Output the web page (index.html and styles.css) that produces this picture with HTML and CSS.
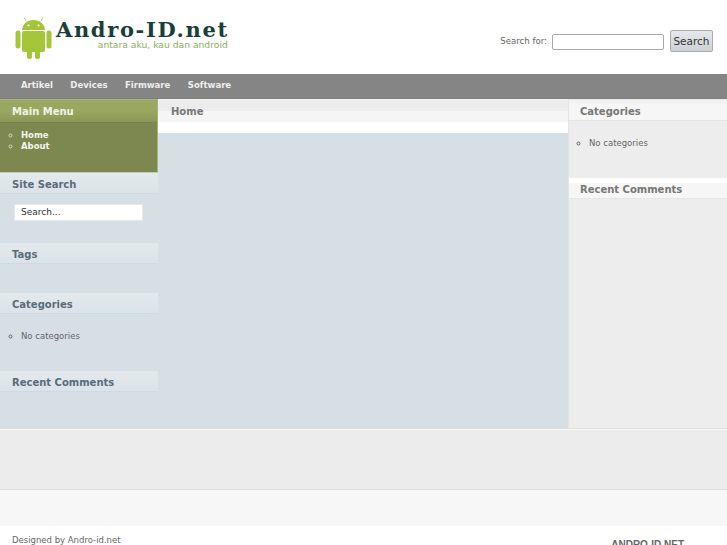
FILE: index.html
```html
<!DOCTYPE html>
<html lang="id">
<head>
<meta charset="utf-8">
<title>Andro-ID.net</title>
<link rel="stylesheet" href="styles.css">
</head>
<body>
<div class="page">
  <header class="header">
    <div class="logo">
      <svg class="logo-icon" width="37" height="42" viewBox="0 0 37 42" aria-hidden="true">
        <g fill="#a4c639">
          <path d="M7 13 C7.500 7 12 3 18.500 3 C25 3 29.500 7 30 13 Z"/>
          <rect x="7" y="14" width="23" height="21" rx="2"/>
          <rect x="0.500" y="13.500" width="5" height="18" rx="2.500"/>
          <rect x="31.500" y="13.500" width="5" height="18" rx="2.500"/>
          <rect x="12" y="30" width="5" height="12" rx="2.500"/>
          <rect x="20" y="30" width="5" height="12" rx="2.500"/>
        </g>
        <path d="M11 4 L9 0.500 M26 4 L28 0.500" stroke="#a4c639" stroke-width="0.800" fill="none"/>
        <circle cx="13.500" cy="8.500" r="1.100" fill="#fff"/>
        <circle cx="23.500" cy="8.500" r="1.100" fill="#fff"/>
      </svg>
      <div class="logo-text">
        <div class="logo-name">Andro-ID.net</div>
        <div class="logo-tag">antara aku, kau dan android</div>
      </div>
    </div>
    <form class="top-search">
      <label class="top-label" for="q">Search for:</label>
      <input class="top-input" id="q" type="text">
      <button class="top-button" type="button">Search</button>
    </form>
  </header>
  <nav class="nav">
    <a class="nav-link">Artikel</a>
    <a class="nav-link">Devices</a>
    <a class="nav-link">Firmware</a>
    <a class="nav-link">Software</a>
  </nav>
  <div class="columns">
    <aside class="left">
      <section class="menu-box">
        <h3 class="menu-title">Main Menu</h3>
        <ul class="list menu-list">
          <li>Home</li>
          <li>About</li>
        </ul>
      </section>
      <h3 class="side-title">Site Search</h3>
      <div class="side-search"><div class="side-input">Search...</div></div>
      <h3 class="side-title tags">Tags</h3>
      <h3 class="side-title cats">Categories</h3>
      <ul class="list plain"><li>No categories</li></ul>
      <h3 class="side-title recent">Recent Comments</h3>
    </aside>
    <main class="center">
      <h2 class="page-title">Home</h2>
    </main>
    <aside class="right">
      <h3 class="right-title">Categories</h3>
      <ul class="list plain right-list"><li>No categories</li></ul>
      <h3 class="right-title right-recent">Recent Comments</h3>
    </aside>
  </div>
  <div class="band"></div>
  <div class="band-light"></div>
  <footer class="footer">
    <span class="credit">Designed by Andro-id.net</span>
    <span class="brand">ANDRO-ID.NET</span>
  </footer>
</div>
</body>
</html>
```

FILE: styles.css
```css
html, body {
  margin: 0;
  padding: 0;
}
body {
  font-family: "DejaVu Sans", sans-serif;
  font-size: 8.500px;
  color: #555;
  background: #fff;
}
.page {
  height: 545px;
  overflow: hidden;
}
.header {
  height: 74px;
  display: flex;
  justify-content: space-between;
  align-items: flex-start;
  box-sizing: border-box;
  padding: 0 14px 0 15px;
}
.logo {
  display: flex;
  padding-top: 17px;
  gap: 4px;
}
.logo-icon {
  display: block;
}
.logo-text {
  display: flex;
  flex-direction: column;
  align-items: flex-end;
  padding-top: 5px;
}
.logo-name {
  font-family: "DejaVu Serif", serif;
  font-weight: bold;
  font-size: 21px;
  line-height: 16px;
  letter-spacing: 1.650px;
  color: #17403d;
  white-space: nowrap;
}
.logo-tag {
  font-size: 9.200px;
  line-height: 9px;
  margin: 2px 1px 0 0;
  color: #8cad5c;
  white-space: nowrap;
}
.top-search {
  display: flex;
  align-items: center;
  padding-top: 30px;
  margin: 0;
}
.top-label {
  font-size: 8.600px;
  color: #666;
  margin-right: 5px;
}
.top-input {
  width: 112px;
  height: 16px;
  box-sizing: border-box;
  border: 1px solid #a9a9a9;
  border-radius: 2px;
  background: #fff;
  margin: 1px 6px 0 0;
  padding: 0;
}
.top-button {
  width: 43px;
  height: 22px;
  box-sizing: border-box;
  border: 1px solid #aaa;
  border-radius: 2px;
  background: linear-gradient(#e6e9ec, #cdd1d5);
  font-family: "DejaVu Sans", sans-serif;
  font-size: 10.500px;
  color: #333;
  padding: 0;
}
.nav {
  height: 25px;
  box-sizing: border-box;
  background: #858585;
  display: flex;
  align-items: center;
  padding: 0 0 3px 21px;
  gap: 17.500px;
  box-shadow: inset 0 -1px 0 #7d7d7d;
}
.nav-link {
  font-size: 8.500px;
  font-weight: bold;
  color: #eee;
}
.columns {
  height: 330px;
  display: grid;
  grid-template-columns: 158px 410px 159px;
  background: #d5dfe4;
}
h2, h3 {
  margin: 0;
}
.left {
  min-width: 0;
}
.menu-box {
  height: 74px;
  box-sizing: border-box;
  background: #7c884f;
  border-bottom: 1px solid #c5ccb5;
  border-right: 1px solid #a8b27f;
  border-top: 1px solid #a8b27f;
}
.menu-title {
  height: 23px;
  box-sizing: border-box;
  padding: 1px 0 0 12px;
  font-size: 10px;
  line-height: 22px;
  font-weight: bold;
  color: #f0f2e6;
  background: linear-gradient(#9aa761 0, #9aa761 50%, #8a9655 100%);
  border-bottom: 1px solid #76824b;
}
.list {
  margin: 0;
  padding: 0 0 0 21px;
  list-style: circle;
  font-size: 8.500px;
  line-height: 11px;
}
.menu-list {
  margin-top: 7px;
  font-weight: bold;
  color: #f3f4ea;
}
.menu-list li::marker {
  color: #d5dac2;
}
.side-title {
  height: 21px;
  box-sizing: border-box;
  padding: 1px 0 0 12px;
  font-size: 10px;
  line-height: 22px;
  font-weight: bold;
  color: #596c78;
  background: linear-gradient(#e3eaed, #dbe3e8);
  border-bottom: 1px solid #cddae1;
}
.side-search {
  padding: 10px 0 0 14px;
}
.side-input {
  width: 129px;
  height: 17px;
  box-sizing: border-box;
  background: #fff;
  border: 1px solid #e4e8ea;
  padding-left: 6px;
  font-size: 9px;
  line-height: 15px;
  color: #333;
}
.tags {
  margin-top: 22px;
}
.cats {
  margin-top: 29px;
}
.plain {
  margin-top: 17px;
  color: #666;
}
.recent {
  margin-top: 29px;
}
.center {
  background: #d5dfe4;
}
.page-title {
  height: 34px;
  box-sizing: border-box;
  border-top: 1px solid #f4f4f2;
  padding-left: 13px;
  font-size: 10px;
  line-height: 23px;
  font-weight: bold;
  color: #777;
  background: linear-gradient(#ececec 0, #ececec 11px, #f5f5f5 11px, #f5f5f5 22px, #fff 22px);
}
.right {
  background: #ededed;
  border-left: 1px solid #e2e6e8;
  border-bottom: 1px solid #dedede;
}
.right-title {
  height: 22px;
  box-sizing: border-box;
  padding: 1px 0 0 11px;
  font-size: 10px;
  line-height: 24px;
  font-weight: bold;
  color: #777;
  background: linear-gradient(#ececec 0, #f6f6f6 25%, #f6f6f6 100%);
  border-bottom: 1px solid #e6e6e6;
}
.right-list {
  padding-left: 20px;
  margin-top: 17px;
}
.right-recent {
  height: 21px;
  margin-top: 29px;
  line-height: 22px;
  background: linear-gradient(#fff 0, #fff 5px, #f6f6f6 5px);
}
.band {
  height: 60px;
  box-sizing: border-box;
  background: #ececec;
  border-top: 1px solid #f7f7f7;
}
.band-light {
  height: 37px;
  box-sizing: border-box;
  background: #f7f7f7;
  border-top: 1px solid #dfdfdf;
}
.footer {
  display: flex;
  justify-content: space-between;
  padding: 8px 43px 0 12px;
  font-size: 8.500px;
  color: #666;
}
.credit {
  line-height: 12px;
}
.brand {
  font-family: "Liberation Sans", sans-serif;
  font-weight: bold;
  font-size: 10px;
  color: #666;
  margin-top: 5px;
}
```
